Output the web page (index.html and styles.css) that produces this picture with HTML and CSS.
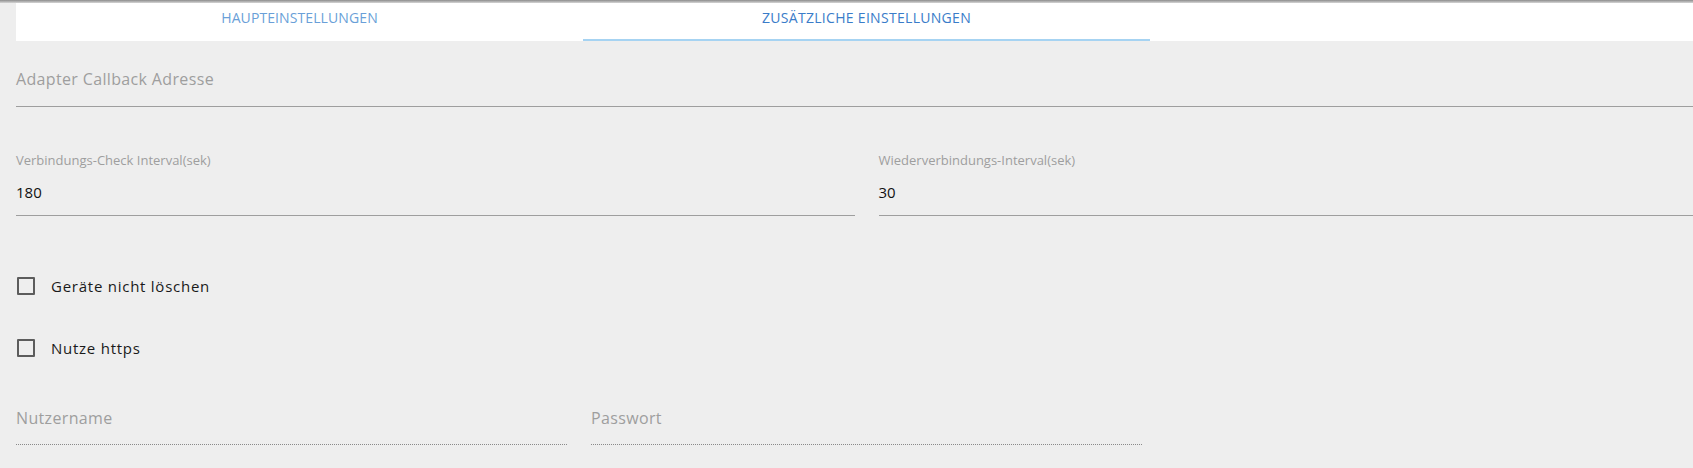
FILE: index.html
```html
<!doctype html>
<html lang="de">
<head>
    <meta charset="UTF-8">
    <title>Einstellungen</title>
    <link rel="stylesheet" href="styles.css">
</head>
<body>
<div class="topline"></div>
<div class="tabs">
    <div class="tab">Haupteinstellungen</div>
    <div class="tab active">Zusätzliche Einstellungen</div>
</div>
<div class="form">
    <div class="field first">
        <span class="input placeholder">Adapter Callback Adresse</span>
    </div>

    <div class="row two">
        <div class="field">
            <label class="small">Verbindungs-Check Interval(sek)</label>
            <span class="input value">180</span>
        </div>
        <div class="field">
            <label class="small">Wiederverbindungs-Interval(sek)</label>
            <span class="input value">30</span>
        </div>
    </div>

    <div class="check first-check">
        <span class="box"></span>
        <span class="check-label">Geräte nicht löschen</span>
    </div>
    <div class="check">
        <span class="box"></span>
        <span class="check-label">Nutze https</span>
    </div>

    <div class="row three">
        <div class="field">
            <span class="input placeholder dotted">Nutzername</span>
        </div>
        <div class="field">
            <span class="input placeholder dotted">Passwort</span>
        </div>
        <div class="field"></div>
    </div>
</div>
</body>
</html>
```

FILE: styles.css
```css
* {
    padding: 0;
    margin: 0;
    box-sizing: border-box;
}

html, body {
    height: 100%;
}

body {
    background: #eeeeee;
    font-family: "Open Sans", Roboto, sans-serif;
    overflow: hidden;
}

.topline {
    height: 3px;
    background: linear-gradient(#8c8c8c, #d6d6d6);
}

.tabs {
    margin-left: 16px;
    height: 38px;
    background: #fff;
    display: flex;
}

.tab {
    width: 567px;
    height: 38px;
    line-height: 30px;
    text-align: center;
    text-transform: uppercase;
    font-size: 14px;
    letter-spacing: 0.1px;
    color: #6a9fd8;
}

.tab.active {
    color: #3a7cc9;
    letter-spacing: 0.3px;
    border-bottom: 2px solid #a6d3f2;
}

.form {
    padding-left: 16px;
    width: 1741px;
}

.field {
    margin-right: 24px;
}

.field.first {
    margin-top: 28px;
}

.input {
    display: block;
    line-height: 20px;
    font-size: 16px;
    border-bottom: 1px solid #9e9e9e;
}

.placeholder {
    color: #9e9e9e;
    letter-spacing: 0.35px;
    padding-bottom: 17px;
}

.placeholder.dotted {
    padding-bottom: 16px;
    border-bottom: 1px dotted #8a8a8a;
}

.value {
    color: #111;
    font-size: 15px;
    padding-bottom: 13px;
    margin-top: 14px;
}

.small {
    display: block;
    font-size: 13px;
    line-height: 16px;
    color: #9e9e9e;
}

.row {
    display: grid;
}

.row.two {
    margin-top: 45px;
    grid-template-columns: 862.5px 862.5px;
}

.row.three {
    margin-top: 49px;
    grid-template-columns: 575px 575px 575px;
}

.check {
    display: flex;
    align-items: center;
    height: 22px;
    margin-top: 40px;
}

.check.first-check {
    margin-top: 59px;
}

.box {
    width: 18px;
    height: 18px;
    margin-left: 1px;
    border: 2px solid #5c5c5c;
    border-radius: 1px;
}

.check-label {
    margin-left: 16px;
    font-size: 15px;
    letter-spacing: 0.75px;
    color: #1a1a1a;
}
```
